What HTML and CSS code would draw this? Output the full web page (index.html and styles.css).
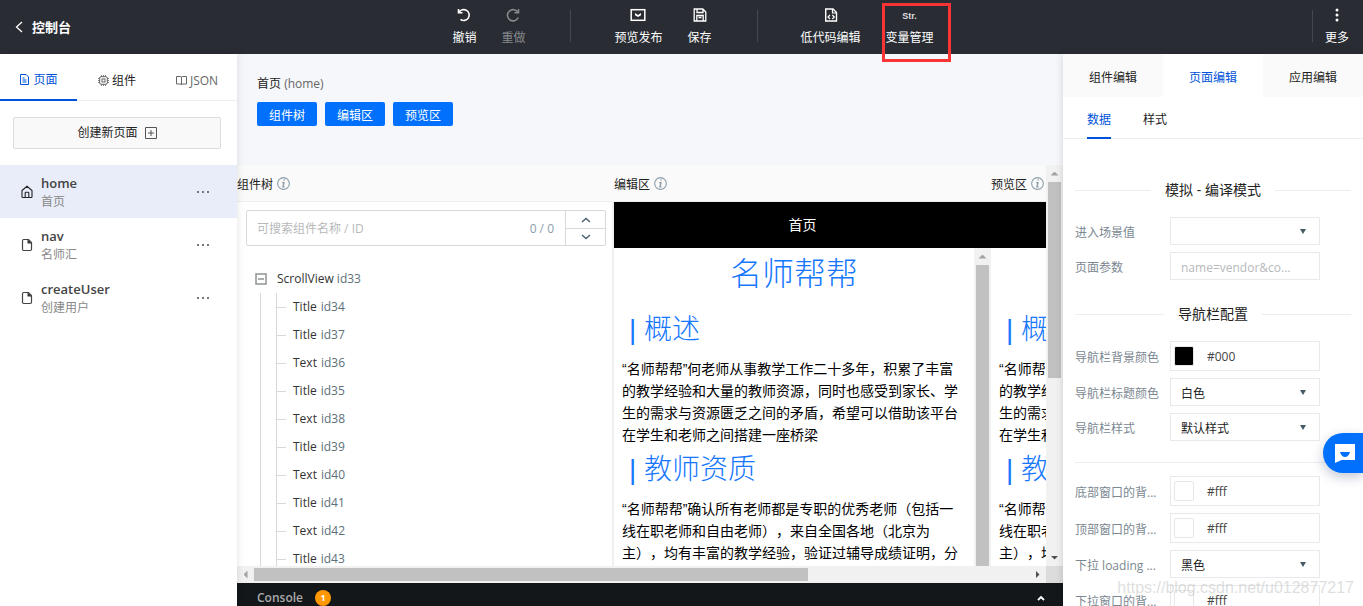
FILE: index.html
```html
<!DOCTYPE html>
<html lang="zh-CN">
<head>
<meta charset="utf-8">
<title>控制台</title>
<link rel="stylesheet" href="styles.css">
</head>
<body>
<svg class="defs" aria-hidden="true">
  <symbol id="i-info" viewBox="0 0 14 14"><circle cx="7" cy="7" r="6.300" fill="none" stroke="currentColor" stroke-width="1.200"/><path d="M8.300 3.300h-1.300M5.600 6h1.900L6.400 10.600h1.800" fill="none" stroke="currentColor" stroke-width="1.500"/></symbol>
  <symbol id="i-page" viewBox="0 0 12 14"><path d="M2.700 1.500h4.800l3 3v6.800q0 1.200-1.200 1.200H2.700q-1.200 0-1.200-1.200V2.700q0-1.200 1.200-1.200z" fill="none" stroke="#444" stroke-width="1.200"/><path d="M6.500 1.300l4.300 4.200H6.500z" fill="#333"/></symbol>
  <symbol id="i-dots" viewBox="0 0 14 4"><path d="M1 1h2v2H1zM6 1h2v2H6zM11 1h2v2h-2z" fill="currentColor"/></symbol>
</svg>

<header class="topbar">
  <a class="back" href="#"><svg width="8" height="12" viewBox="0 0 8 12"><path d="M7 1 1.500 6 7 11" fill="none" stroke="currentColor" stroke-width="1.300"/></svg>控制台</a>
  <nav class="tools">
    <button class="tool"><svg width="16" height="14" viewBox="0 0 16 14"><path d="M2.500 1v3.800h4M3 4.600A5.400 5.400 0 1 1 4.500 11.300" fill="none" stroke="currentColor" stroke-width="1.600"/></svg>撤销</button>
    <button class="tool" disabled><svg width="16" height="14" viewBox="0 0 16 14"><path d="M13.500 1v3.800h-4M13 4.600A5.600 5.600 0 1 0 13.200 9.500" fill="none" stroke="currentColor" stroke-width="1.600"/></svg>重做</button>
    <span class="split"></span>
    <button class="tool"><svg width="16" height="14" viewBox="0 0 16 14"><rect x="1.200" y="1.700" width="13.600" height="10.600" fill="none" stroke="currentColor" stroke-width="1.500"/><path d="M5 5l3 2 3-2v2.200L8 9 5 7.200z" fill="currentColor"/></svg>预览发布</button>
    <button class="tool"><svg width="16" height="14" viewBox="0 0 16 14"><path d="M2.200 1h8.600l3 3v9H2.200zM5 1v3.500h6V2M4.800 13V7.500h6.400V13M6.500 9.500h3" fill="none" stroke="currentColor" stroke-width="1.300"/></svg>保存</button>
    <span class="split"></span>
    <button class="tool"><svg width="16" height="14" viewBox="0 0 16 14"><path d="M2.700 1h7.300l3.500 3.500V13H2.700z" fill="none" stroke="currentColor" stroke-width="1.400"/><path d="M9.500 1v4h4M7 7 5 9l2 2M9.300 7l2 2-2 2" fill="none" stroke="currentColor" stroke-width="1.200"/></svg>低代码编辑</button>
    <button class="tool marked"><span class="str">Str.</span>变量管理</button>
  </nav>
  <div class="more">
    <span class="split"></span>
    <button class="tool"><svg width="16" height="14" viewBox="0 0 16 14"><circle cx="8" cy="2" r="1.500" fill="currentColor"/><circle cx="8" cy="7" r="1.500" fill="currentColor"/><circle cx="8" cy="12" r="1.500" fill="currentColor"/></svg>更多</button>
  </div>
</header>

<div class="shell">
  <aside class="pages">
    <nav class="page-tabs">
      <a class="page-tab active" href="#"><svg width="11" height="11" viewBox="0 0 11 11"><path d="M1.500.5h5.700l2.300 2.500v7.500h-8zM3.500 4h2M3.500 6h4M3.500 8h4" fill="none" stroke="currentColor"/></svg>页面</a>
      <a class="page-tab" href="#"><svg class="dim" width="11" height="11" viewBox="0 0 11 11"><rect x="1.700" y="1.700" width="7.600" height="7.600" rx="1.500" fill="none" stroke="currentColor"/><rect x="4" y="4" width="3" height="3" fill="none" stroke="currentColor"/><path d="M3.500 0v2M5.500 0v2M7.500 0v2M3.500 9v2M5.500 9v2M7.500 9v2M0 3.500h2M0 5.500h2M0 7.500h2M9 3.500h2M9 5.500h2M9 7.500h2" stroke="currentColor" stroke-width=".8"/></svg>组件</a>
      <a class="page-tab json" href="#"><svg width="11" height="11" viewBox="0 0 11 11"><path d="M.5 1.500h3.700q1.300 0 1.300 1v7.500q0-1-1.300-1H.5zM10.500 1.500H6.800q-1.300 0-1.300 1v7.500q0-1 1.300-1h3.700z" fill="none" stroke="currentColor"/></svg>JSON</a>
    </nav>
    <button class="create">创建新页面<svg width="12" height="12" viewBox="0 0 12 12"><path d="M.5.5h11v11H.5zM6 3v6M3 6h6" fill="none" stroke="currentColor"/></svg></button>
    <ul class="page-list">
      <li class="page-item current"><svg width="12" height="14" viewBox="0 0 12 14"><path d="M1 5.500 6 1.300l5 4.200v6.300q0 .7-.7.7H1.700q-.7 0-.7-.7zM4.200 12.500V8q0-.8.800-.8h2q.8 0 .8.800v4.500" fill="none" stroke="currentColor" stroke-width="1.100"/></svg><div class="page-name"><strong>home</strong><span>首页</span></div><button class="dots" aria-label="home 操作"><svg width="14" height="4"><use href="#i-dots"/></svg></button></li>
      <li class="page-item"><svg width="12" height="14"><use href="#i-page"/></svg><div class="page-name"><strong>nav</strong><span>名师汇</span></div><button class="dots" aria-label="nav 操作"><svg width="14" height="4"><use href="#i-dots"/></svg></button></li>
      <li class="page-item"><svg width="12" height="14"><use href="#i-page"/></svg><div class="page-name"><strong>createUser</strong><span>创建用户</span></div><button class="dots" aria-label="createUser 操作"><svg width="14" height="4"><use href="#i-dots"/></svg></button></li>
    </ul>
  </aside>

  <main class="center">
    <section class="intro">
      <h1>首页 <span>(home)</span></h1>
      <div class="toggles"><button>组件树</button><button>编辑区</button><button>预览区</button></div>
    </section>
    <div class="workspace">
      <div class="columns">
        <section class="column">
          <h2 class="col-head"><span>组件树</span><svg width="13" height="13"><use href="#i-info"/></svg></h2>
          <div class="tree-panel">
            <div class="search">
              <input type="text" placeholder="可搜索组件名称 / ID" aria-label="搜索组件">
              <span class="count">0 / 0</span>
              <div class="steps">
                <button aria-label="上一个"><svg width="10" height="6" viewBox="0 0 10 6"><path d="M1 5l4-3.500L9 5" fill="none" stroke="currentColor" stroke-width="1.500"/></svg></button>
                <button aria-label="下一个"><svg width="10" height="6" viewBox="0 0 10 6"><path d="M1 1l4 3.500L9 1" fill="none" stroke="currentColor" stroke-width="1.500"/></svg></button>
              </div>
            </div>
            <div class="tree">
              <div class="root"><svg width="12" height="12" viewBox="0 0 12 12"><path d="M1 1h10v10H1zM3 6h6" fill="none" stroke="#8e9494" stroke-width="1.500"/></svg><span>ScrollView <i>id33</i></span></div>
              <div class="branch"><ul>
                <li>Title <i>id34</i></li><li>Title <i>id37</i></li><li>Text <i>id36</i></li><li>Title <i>id35</i></li><li>Text <i>id38</i></li><li>Title <i>id39</i></li><li>Text <i>id40</i></li><li>Title <i>id41</i></li><li>Text <i>id42</i></li><li>Title <i>id43</i></li>
              </ul></div>
            </div>
          </div>
        </section>
        <section class="column">
          <h2 class="col-head"><span>编辑区</span><svg width="13" height="13"><use href="#i-info"/></svg></h2>
          <div class="device">
            <div class="device-bar">首页</div>
            <div class="device-body">
              <article class="doc">
                <h3>名师帮帮</h3>
                <h4>| 概述</h4>
                <p>“名师帮帮”何老师从事教学工作二十多年，积累了丰富的教学经验和大量的教师资源，同时也感受到家长、学生的需求与资源匮乏之间的矛盾，希望可以借助该平台在学生和老师之间搭建一座桥梁</p>
                <h4>| 教师资质</h4>
                <p>“名师帮帮”确认所有老师都是专职的优秀老师（包括一线在职老师和自由老师），来自全国各地（北京为主），均有丰富的教学经验，验证过辅导成绩证明，分</p>
              </article>
              <div class="vscroll"><b class="up"></b><div class="thumb"></div></div>
            </div>
          </div>
        </section>
        <section class="column">
          <h2 class="col-head"><span>预览区</span><svg width="13" height="13"><use href="#i-info"/></svg></h2>
          <div class="device">
            <div class="device-bar"></div>
            <div class="device-body">
              <article class="doc">
                <h3>名师帮帮</h3>
                <h4>| 概述</h4>
                <p>“名师帮帮”何老师从事教学工作二十多年，积累了丰富的教学经验和大量的教师资源，同时也感受到家长、学生的需求与资源匮乏之间的矛盾，希望可以借助该平台在学生和老师之间搭建一座桥梁</p>
                <h4>| 教师资质</h4>
                <p>“名师帮帮”确认所有老师都是专职的优秀老师（包括一线在职老师和自由老师），来自全国各地（北京为主），均有丰富的教学经验，验证过辅导成绩证明，分</p>
              </article>
              <div class="vscroll"><b class="up"></b><div class="thumb"></div></div>
            </div>
          </div>
        </section>
      </div>
      <div class="vscroll outer"><b class="up"></b><div class="thumb"></div><b class="down"></b></div>
      <div class="hscroll"><b class="left"></b><div class="track"><div class="thumb"></div></div><b class="right"></b></div>
      <div class="corner"></div>
    </div>
    <footer class="console"><strong>Console</strong><span class="badge">1</span><button aria-label="展开"><svg width="8" height="6" viewBox="0 0 8 6"><path d="M1 5l3-3 3 3" fill="none" stroke="currentColor" stroke-width="1.800"/></svg></button></footer>
  </main>

  <aside class="props">
    <nav class="prop-tabs"><a href="#">组件编辑</a><a href="#" class="active">页面编辑</a><a href="#">应用编辑</a></nav>
    <nav class="sub-tabs"><a href="#" class="active">数据</a><a href="#">样式</a></nav>
    <form class="form">
      <h2 class="legend first">模拟 - 编译模式</h2>
      <div class="field"><label for="scene">进入场景值</label><span class="select"><select id="scene"><option></option></select></span></div>
      <div class="field"><label for="params">页面参数</label><input class="box" id="params" type="text" placeholder="name=vendor&amp;co..."></div>
      <h2 class="legend">导航栏配置</h2>
      <div class="field"><label for="navbg">导航栏背景颜色</label><span class="color"><b class="black"></b><input id="navbg" type="text" value="#000"></span></div>
      <div class="field"><label for="navtitle">导航栏标题颜色</label><span class="select"><select id="navtitle"><option>白色</option></select></span></div>
      <div class="field"><label for="navstyle">导航栏样式</label><span class="select"><select id="navstyle"><option>默认样式</option></select></span></div>
      <hr>
      <div class="field"><label for="bottombg">底部窗口的背...</label><span class="color"><b></b><input id="bottombg" type="text" value="#fff"></span></div>
      <div class="field"><label for="topbg">顶部窗口的背...</label><span class="color"><b></b><input id="topbg" type="text" value="#fff"></span></div>
      <div class="field"><label for="loading">下拉 loading ...</label><span class="select"><select id="loading"><option>黑色</option></select></span></div>
      <div class="field"><label for="pullbg">下拉窗口的背...</label><span class="color"><b></b><input id="pullbg" type="text" value="#fff"></span></div>
    </form>
  </aside>
</div>
<button class="chat" aria-label="客服"><svg width="20" height="19" viewBox="0 0 20 19"><path d="M0 0h20v16H6.500L0 19z" fill="#fff"/><path d="M5 8h10q-1.500 5-5 5T5 8z" fill="#0070fd"/></svg></button>
<div class="watermark">https://blog.csdn.net/u012877217</div>
</body>
</html>
```
FILE: styles.css
```css
*, *::before, *::after { box-sizing: border-box; }
body {
  margin: 0; height: 100vh; display: flex; flex-direction: column; overflow: hidden; position: relative;
  font: 12px/18px "Open Sans", "Noto Sans CJK SC", sans-serif; color: #222; background: #fff;
}
button, input, select { font: inherit; color: inherit; margin: 0; padding: 0; border: 0; background: none; border-radius: 0; outline: 0; }
a { color: inherit; text-decoration: none; }
ul { margin: 0; padding: 0; list-style: none; }
i { font-style: normal; }
h1, h2, h3, h4, p { margin: 0; font-weight: 400; }
svg { display: block; flex: none; }
.defs { position: absolute; width: 0; height: 0; }

.topbar { flex: none; height: 54px; display: flex; background: #292c33; color: #fff; }
.back { flex: 1; display: flex; align-items: center; gap: 9px; padding-left: 15px; font-size: 13px; font-weight: 700; }
.tools { display: flex; gap: 25px; padding-left: 22px; }
.tool { display: flex; flex-direction: column; align-items: center; gap: 7px; padding-top: 8px; height: 54px; white-space: nowrap; }
.tool:disabled { color: #87898d; }
.split { width: 1px; height: 32px; margin: 10px 18px 0 20px; background: #44474d; }
.str { height: 14px; font: 700 9px/16px "Liberation Sans", sans-serif; color: #ddd; }
.marked { position: relative; }
.marked::after { content: ""; position: absolute; left: -4px; top: 3px; width: 69px; height: 59px; border: 3px solid #f93434; z-index: 5; }
.more { flex: 1; display: flex; justify-content: flex-end; padding-right: 14px; }
.more .split { margin-right: 12px; }

.shell { flex: 1; min-height: 0; display: flex; }
.pages { flex: none; width: 237px; box-shadow: 0 0 8px rgba(0,0,0,.12); z-index: 2; background: #fff; }
.page-tabs { display: grid; grid-template-columns: 77px 1fr 1fr; height: 47px; border-bottom: 1px solid #ebedf0; }
.page-tab { display: flex; align-items: center; justify-content: center; gap: 3px; height: 47px; padding-top: 6px; }
.page-tab.active { color: #0052d9; border-bottom: 2px solid #0052d9; }
.page-tab.json, .dim { color: #666; }
.create { display: flex; align-items: center; justify-content: center; gap: 7px; width: calc(100% - 29px); height: 32px; margin: 16px 16px 16px 13px; border: 1px solid #dcdcdc; border-radius: 2px; background: #f9f9f9; }
.create svg { color: #555; }
.page-item { display: flex; align-items: center; height: 53px; padding: 0 27px 0 21px; gap: 8px; }
.page-item.current { background: #e9edfa; }
.page-name { flex: 1; display: flex; flex-direction: column; padding-top: 1px; color: #888; }
.page-name strong { font-size: 13px; line-height: 20px; font-weight: 600; color: #444; }
.dots { color: #777; }

.center { flex: 1; min-width: 0; display: flex; flex-direction: column; }
.intro { flex: none; height: 111px; padding: 21px 20px 0; background: #f6f7fa; }
h1 { font-size: 12px; line-height: 18px; }
h1 span { color: #666; }
.toggles { display: flex; gap: 8px; margin-top: 9px; }
.toggles button { width: 60px; height: 24px; padding-top: 4px; background: #0070fd; color: #fff; border-radius: 2px; }
.workspace { flex: 1; min-height: 0; display: grid; grid-template: minmax(0, 1fr) 17px / minmax(0, 1fr) 17px; }
.columns { display: grid; grid-template-columns: repeat(3, 377px); overflow: hidden; }
.column { display: flex; flex-direction: column; min-height: 0; }
.col-head { flex: none; display: flex; align-items: center; gap: 4px; height: 37px; background: #fafafa; font-size: 12px; border-bottom: 1px solid #eee; }
.col-head span { padding-top: 3px; }
.col-head svg { color: #8b9eaa; }
.tree-panel { flex: 1; min-height: 0; overflow: hidden; padding: 8px 6px 0 9px; border-right: 2px solid #f0f0f0; }
.search { display: flex; height: 36px; border: 1px solid #d9d9d9; border-radius: 2px; align-items: center; }
.search input { flex: 1; min-width: 0; padding: 2px 0 0 10px; }
input::placeholder { color: #b7b9bb; opacity: 1; }
.count { padding: 1px 11px 0 0; color: #8b9eaa; }
.steps { width: 40px; height: 34px; display: grid; grid-template-rows: 1fr 1fr; border-left: 1px solid #d9d9d9; color: #4d6470; }
.steps button { display: grid; place-items: center; }
.steps button + button { border-top: 1px solid #d9d9d9; }
.tree { padding: 19px 0 0 9px; color: #333; }
.tree i { color: #5b7079; }
.root { display: flex; align-items: center; gap: 10px; height: 28px; }
.branch { margin-left: 5px; padding-left: 15px; border-left: 1px solid #d9d9d9; }
.branch ul { border-left: 1px solid #d9d9d9; }
.branch li { display: flex; align-items: center; gap: 4px; height: 28px; }
.branch li::before { content: ""; width: 9px; height: 1px; background: #d9d9d9; margin-right: 3px; }
.device { flex: 1; min-height: 0; display: flex; flex-direction: column; color: #000; }
.device-bar { flex: none; height: 46px; background: #000; color: #fff; font-size: 14px; line-height: 46px; text-align: center; }
.device-body { flex: 1; min-height: 0; display: flex; }
.doc { flex: 1; min-width: 0; overflow: hidden; padding: 2px 8px 0; font: 14px/22px "Liberation Sans", "Noto Sans CJK SC", sans-serif; text-spacing-trim: space-all; }
.doc h3 { font-size: 32px; line-height: 48px; margin-bottom: 10px; text-align: center; color: #1677ff; font-weight: 300; }
.doc h4 { font-size: 28px; line-height: 44px; margin-bottom: 6px; padding-left: 7px; color: #1677ff; font-weight: 300; }
.doc p { margin-bottom: 2px; }
.vscroll { flex: none; width: 17px; background: #f1f1f1; display: flex; flex-direction: column; align-items: center; }
.vscroll .thumb { width: 13px; flex: 1; background: #c1c1c1; }
.up, .down, .left, .right { flex: none; width: 17px; height: 17px; display: grid; place-items: center; }
.up::before, .down::before, .left::before, .right::before { content: ""; width: 8px; height: 4px; background: #a3a3a3; clip-path: polygon(50% 0, 100% 100%, 0 100%); }
.down::before, .right::before { background: #505050; }
.down::before { clip-path: polygon(0 0, 100% 0, 50% 100%); }
.left::before { width: 4px; height: 8px; clip-path: polygon(100% 0, 100% 100%, 0 50%); }
.right::before { width: 4px; height: 8px; clip-path: polygon(0 0, 100% 50%, 0 100%); }
.outer .thumb { flex: none; height: 49%; }
.outer .down { margin-top: auto; }
.hscroll { display: flex; align-items: center; background: #f1f1f1; }
.track { flex: 1; }
.hscroll .thumb { width: 71.500%; height: 13px; background: #c1c1c1; }
.corner { background: #dcdcdc; }
.console { flex: none; height: 23px; display: flex; align-items: center; gap: 12px; padding: 7px 18px 0 20px; background: #13171a; color: #aaa; overflow: hidden; }
.console strong { font-weight: 600; }
.badge { width: 16px; height: 16px; border-radius: 50%; background: #ff9800; color: #fff; font-size: 9px; font-weight: 700; line-height: 16px; text-align: center; }
.console button { margin-left: auto; color: #fff; }

.props { flex: none; width: 300px; display: flex; flex-direction: column; background: #fff; box-shadow: 0 0 8px rgba(0,0,0,.15); z-index: 1; overflow: hidden; }
.prop-tabs { flex: none; display: grid; grid-template-columns: repeat(3, 1fr); height: 43px; }
.prop-tabs a { display: grid; place-items: center; padding-top: 4px; background: #fafafa; }
.prop-tabs .active { background: #fff; color: #0052d9; }
.sub-tabs { flex: none; display: flex; gap: 32px; height: 42px; padding-left: 24px; border-bottom: 1px solid #ebedf0; }
.sub-tabs a { height: 42px; line-height: 46px; }
.sub-tabs .active { color: #0052d9; border-bottom: 2px solid #0052d9; }
.form { flex: 1; min-height: 0; overflow: hidden; padding: 0 12px; }
.legend { display: flex; align-items: center; gap: 14px; height: 34px; margin: 17px 0 10px; font-size: 14px; color: #222; }
.legend.first { margin-top: 34px; }
.legend::before, .legend::after { content: ""; flex: 1; height: 1px; background: #ebedf0; }
.field { display: flex; align-items: center; margin-bottom: 7px; }
.field label { width: 84px; margin-right: 11px; padding-top: 3px; color: #7b8791; white-space: nowrap; }
.select { position: relative; width: 150px; }
.select::after { content: ""; position: absolute; right: 14px; top: 12px; width: 6px; height: 5px; background: #455a64; clip-path: polygon(0 0, 100% 0, 50% 100%); }
.select select, .box { display: block; width: 150px; height: 28px; padding: 4px 10px 0; border: 1px solid #e7e9ec; background: #fff; appearance: none; }
.box { padding-top: 2px; }
.color { display: flex; align-items: center; width: 150px; height: 30px; padding-left: 3px; gap: 13px; border: 1px solid #e7e9ec; }
.color b { width: 20px; height: 20px; border: 1px solid #e7e7e7; border-radius: 2px; }
.color .black { background: #000; }
.color input { width: 90px; padding-top: 1px; color: #444; }
hr { border: 0; border-top: 1px solid #ebedf0; margin: 21px 0 13px; }
.chat { position: absolute; right: 0; top: 433px; width: 40px; height: 40px; padding-left: 12px; background: #0070fd; border-radius: 20px 0 0 20px; box-shadow: 0 4px 12px rgba(0,30,80,.25); z-index: 6; }
.watermark { position: absolute; right: 9px; bottom: 8px; font: 16px/20px "Liberation Sans", sans-serif; color: rgba(190,190,190,.5); z-index: 7; }
```
